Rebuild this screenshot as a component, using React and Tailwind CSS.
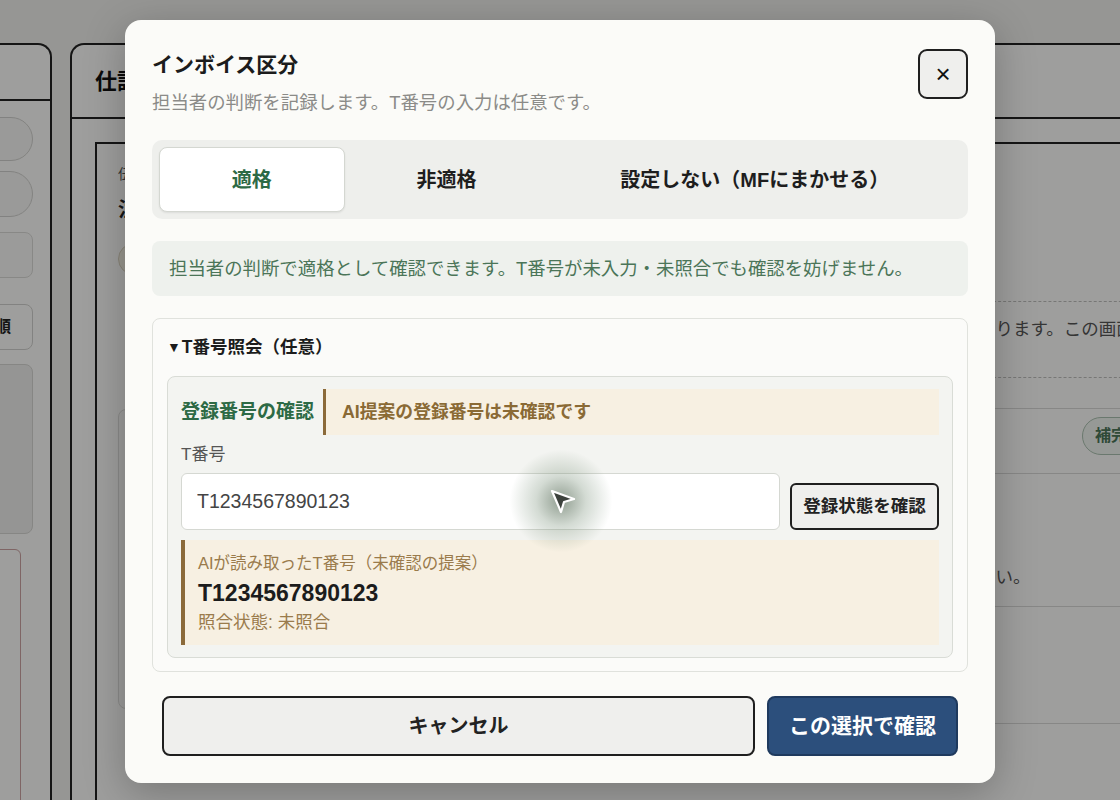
const font = "font-['Liberation_Sans','Noto_Sans_CJK_JP',sans-serif]";

const tabs = [
  { label: "適格", active: true },
  { label: "非適格" },
  { label: "設定しない（MFにまかせる）" },
];

function BackgroundPage() {
  return (
    <div className="flex h-full gap-[18px] pt-[43px]">
      {/* left panel */}
      <aside className="-ml-[100px] flex w-[152px] shrink-0 flex-col overflow-hidden rounded-tr-[14px] border-2 border-b-0 border-[#222] bg-[#fbfbf9]">
        <div className="h-[56px] shrink-0 border-b-2 border-[#222]" />
        <div className="flex shrink-0 flex-col pt-[16px] pr-[17px] pl-[10px]">
          <div className="h-[44px] rounded-full border border-[#cfcfcc] bg-[#f4f4f2]" />
          <div className="mt-[10px] h-[46px] rounded-full border border-[#cfcfcc] bg-[#f4f4f2]" />
          <div className="mt-[15px] h-[46px] rounded-[8px] border border-[#d8d8d5] bg-[#f6f6f4]" />
          <div className="mt-[26px] flex h-[46px] items-center justify-end rounded-[8px] border border-[#cfcfcc] pr-[21px] text-[16px] font-bold text-[#222]">
            手順
          </div>
          <div className="mt-[14px] h-[170px] rounded-[8px] border border-[#d4d4d1] bg-[#ececea]" />
          <div className="mt-[15px] mr-[12px] h-[300px] rounded-[6px] border border-[#c9a0a0] bg-[#fbfbf9]" />
        </div>
      </aside>

      {/* main panel */}
      <main className="flex w-[1100px] shrink-0 flex-col rounded-tl-[14px] border-2 border-r-0 border-b-0 border-[#222] bg-[#fbfbf9]">
        <div className="flex h-[74px] shrink-0 items-center border-b-2 border-[#222] pl-[23px] text-[22px] font-bold text-[#111]">
          仕訳の確認
        </div>
        <div className="flex-1 pt-[23px] pl-[23px]">
          <div className="flex h-full border-t-2 border-l-2 border-[#222]">
            <div className="w-[881px] shrink-0 pt-[20px] pl-[21px]">
              <div className="text-[14px] text-[#555]">伝票日付</div>
              <div className="mt-[10px] text-[20px] font-bold text-[#222]">注文書</div>
              <div className="mt-[18px] h-[32px] w-[120px] rounded-full border border-[#d8d2bf] bg-[#f3efe2]" />
              <div className="mt-[134px] h-[300px] rounded-[8px] border border-[#dcdcda] bg-[#f7f7f5]" />
            </div>
            <div className="flex flex-1 flex-col pt-[157px] text-[17.5px] text-[#555]">
              <div className="h-[77px] border-y border-dashed border-[#bdbdbb] pt-[14px] whitespace-nowrap">
                あります。この画面で確認してください。
              </div>
              <div className="mt-[30px] flex h-[66px] items-start border-y border-[#d6d6d4] pt-[8px] pl-[104px]">
                <span className="rounded-full border border-[#a9bfae] bg-[#eef3ee] px-[12px] py-[6px] text-[16px] font-bold whitespace-nowrap text-[#4b7558]">
                  補完候補
                </span>
              </div>
              <div className="flex h-[133px] items-end border-b border-[#d6d6d4] pb-[16px] whitespace-nowrap">
                さい。
              </div>
              <div className="h-[117px] border-b border-[#d6d6d4]" />
            </div>
          </div>
        </div>
      </main>
    </div>
  );
}

function Cursor() {
  return (
    <div className="pointer-events-none absolute top-[446px] left-[506px] flex h-[110px] w-[110px] items-center justify-center rounded-full bg-[radial-gradient(circle,rgba(70,92,70,0.6)_0%,rgba(110,135,110,0.3)_32%,rgba(255,255,255,0)_66%)]">
      <svg width="28" height="28" viewBox="0 0 28 28" className="mt-[2px] ml-[4px]">
        <path
          d="M3 3 L25 11 L15 14 L12 24 Z"
          fill="#3d423d"
          stroke="#ffffff"
          strokeWidth="2.2"
          strokeLinejoin="round"
        />
      </svg>
    </div>
  );
}

function InvoiceModal() {
  return (
    <div className="w-[870px] rounded-[16px] bg-[#fbfbf8] px-[27px] pt-[29px] pb-[27px] shadow-[0_10px_40px_rgba(0,0,0,0.25)]">
      {/* header */}
      <div className="flex items-start justify-between">
        <div>
          <h2 className="mt-[3px] text-[21px] leading-[26px] font-bold text-[#1c1c1c]">インボイス区分</h2>
          <p className="mt-[14px] text-[18.4px] leading-[22px] text-[#8b8b88]">
            担当者の判断を記録します。T番号の入力は任意です。
          </p>
        </div>
        <button className="flex h-[50px] w-[50px] items-center justify-center rounded-[9px] border-2 border-[#1f1f1f] bg-[#efefed] text-[26px] leading-none text-[#111]">
          ×
        </button>
      </div>

      {/* tabs */}
      <div className="mt-[26px] flex h-[79px] rounded-[10px] bg-[#eeefec] p-[7px]">
        {tabs.map((t) => (
          <button
            key={t.label}
            className={
              t.active
                ? "flex-auto rounded-[8px] border border-[#d4d7d1] bg-white text-[20px] font-bold text-[#2d6a45] shadow-[0_1px_2px_rgba(0,0,0,0.08)]"
                : "flex-auto text-[20px] font-bold text-[#1e1e1e]"
            }
          >
            {t.label}
          </button>
        ))}
      </div>

      {/* info */}
      <div className="mt-[22px] flex h-[55px] items-center rounded-[8px] bg-[#eef1ed] px-[17px] text-[18.4px] text-[#4b7558]">
        担当者の判断で適格として確認できます。T番号が未入力・未照合でも確認を妨げません。
      </div>

      {/* T番号照会 */}
      <div className="mt-[22px] rounded-[8px] border border-[#e0e2dd] bg-[#fbfbf9] px-[14px] pt-[17px] pb-[13px]">
        <div className="flex h-[22px] items-center text-[17.5px] font-bold text-[#1c1c1c]">
          <span className="mr-[1px] text-[14px]">▼</span>T番号照会（任意）
        </div>
        <div className="mt-[18px] rounded-[8px] border border-[#d9dcd6] bg-[#f3f4f1] px-[13px] pt-[12px] pb-[12px]">
          <div className="flex items-center gap-[9px]">
            <span className="text-[19px] font-bold text-[#2d6a45]">登録番号の確認</span>
            <div className="flex h-[46px] flex-1 items-center border-l-[3px] border-[#8b6a3a] bg-[#f7f0e2] pl-[16px] text-[17.8px] font-bold text-[#8a6a35]">
              AI提案の登録番号は未確認です
            </div>
          </div>
          <div className="mt-[10px] text-[17px] leading-[20px] text-[#555]">T番号</div>
          <div className="mt-[8px] flex items-end gap-[10px]">
            <input
              readOnly
              defaultValue="T1234567890123"
              className="h-[57px] flex-1 rounded-[6px] border border-[#d5d8d2] bg-white px-[15px] text-[19.5px] text-[#444] outline-none"
            />
            <button className="h-[47px] w-[149px] rounded-[6px] border-2 border-[#1f1f1f] bg-[#efefed] text-[17.5px] font-bold text-[#222]">
              登録状態を確認
            </button>
          </div>
          <div className="mt-[10px] border-l-4 border-[#8b6a3a] bg-[#f7f0e2] pt-[13px] pb-[13px] pl-[13px]">
            <div className="text-[16.5px] leading-[20px] text-[#9a7b4c]">AIが読み取ったT番号（未確認の提案）</div>
            <div className="mt-[7px] text-[23px] leading-[26px] font-bold text-[#1c1c1c]">T1234567890123</div>
            <div className="mt-[6px] text-[17.5px] leading-[20px] text-[#9a7b4c]">照合状態: 未照合</div>
          </div>
        </div>
      </div>

      {/* footer */}
      <div className="mt-[24px] flex gap-[12px] px-[10px]">
        <button className="h-[60px] flex-1 rounded-[8px] border-2 border-[#1f1f1f] bg-[#efefed] text-[20px] font-bold text-[#222]">
          キャンセル
        </button>
        <button className="h-[60px] w-[191px] rounded-[8px] border-2 border-[#1f3a5e] bg-[#2c4f7c] text-[21px] font-bold text-white">
          この選択で確認
        </button>
      </div>
    </div>
  );
}

export default function App() {
  return (
    <div className={`relative h-[800px] w-[1120px] overflow-hidden bg-[#eeeeeb] text-[#222] ${font}`}>
      <BackgroundPage />
      <div className="absolute inset-0 flex items-start justify-center bg-black/[0.37] pt-[20px]">
        <InvoiceModal />
      </div>
      <Cursor />
    </div>
  );
}
